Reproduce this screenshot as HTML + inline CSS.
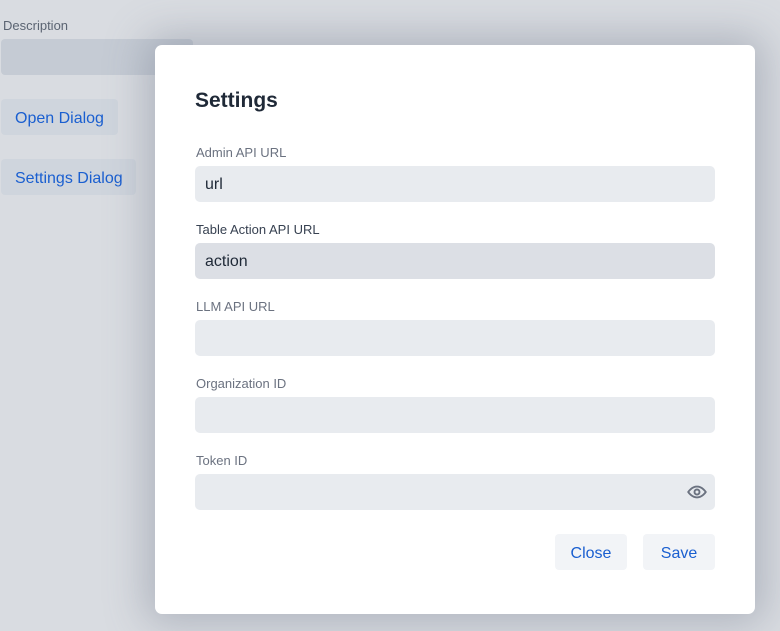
<!DOCTYPE html>
<html><head><style>
*{box-sizing:border-box;margin:0;padding:0}
body{width:780px;height:631px;overflow:hidden;background:#d9dce1;font-family:"Liberation Sans",sans-serif;position:relative}
.abs{position:absolute}
.lbl{font-size:13px;color:#6b7280}
.inp{position:absolute;left:40px;width:520px;height:36px;background:#e8ebef;border-radius:5px;font-size:16px;color:#1f2937;padding:10px 10px}
.btn{position:absolute;background:#f2f4f7;border-radius:4px;color:#1a5fd0;font-size:16px;text-align:center;line-height:40px;height:36px}
</style></head><body>
<div class="abs lbl" style="left:3px;top:18px;color:#5b6472">Description</div>
<div class="abs" style="left:1px;top:39px;width:192px;height:36px;background:#c5cbd4;border-radius:4px"></div>
<div class="abs" style="left:1px;top:99px;width:117px;height:36px;background:#cfd5dd;border-radius:4px;color:#1a5fd0;font-size:16px;line-height:40px;padding-left:14px">Open Dialog</div>
<div class="abs" style="left:1px;top:159px;width:135px;height:36px;background:#cfd5dd;border-radius:4px;color:#1a5fd0;font-size:16px;line-height:40px;padding-left:14px">Settings Dialog</div>
<div class="abs" style="left:155px;top:45px;width:600px;height:569px;background:#fff;border-radius:7px;box-shadow:0 0 40px 10px rgba(100,110,130,.35)">
<div class="abs" style="left:40px;top:44px;font-size:21px;font-weight:bold;color:#1f2937">Settings</div>
<div class="abs lbl" style="left:41px;top:100px">Admin API URL</div>
<div class="inp" style="top:121px">url</div>
<div class="abs lbl" style="left:41px;top:177px;color:#374151">Table Action API URL</div>
<div class="inp" style="top:198px;background:#dcdfe5">action</div>
<div class="abs lbl" style="left:41px;top:254px">LLM API URL</div>
<div class="inp" style="top:275px"></div>
<div class="abs lbl" style="left:41px;top:331px">Organization ID</div>
<div class="inp" style="top:352px"></div>
<div class="abs lbl" style="left:41px;top:408px">Token ID</div>
<div class="inp" style="top:429px">
<svg style="position:absolute;right:7px;top:8px" width="22" height="20" viewBox="0 0 24 24" fill="none" stroke="#6b7280" stroke-width="2.3"><path d="M1.5 12s4-6.5 10.5-6.5S22.5 12 22.5 12s-4 6.5-10.5 6.5S1.5 12 1.5 12z"/><circle cx="12" cy="12" r="3"/></svg>
</div>
<div class="btn" style="left:400px;top:489px;width:72px">Close</div>
<div class="btn" style="left:488px;top:489px;width:72px">Save</div>
</div>
</body></html>
